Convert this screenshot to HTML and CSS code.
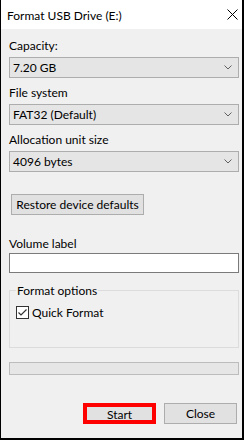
FILE: index.html
```html
<!DOCTYPE html>
<html lang="en">
<head>
  <meta charset="UTF-8" />
  <title>Format USB Drive (E:)</title>
  <link rel="stylesheet" href="styles.css">
</head>
<body>
  <div class="window">
    <div class="titlebar">
      <span class="title">Format USB Drive (E:)</span>
      <svg class="close-x" width="11" height="11" viewBox="0 0 11 11">
        <path d="M0.5 0.5L10.5 10.5M10.5 0.5L0.5 10.5" stroke="#000" stroke-width="1" fill="none"/>
      </svg>
    </div>

    <div class="content">
      <div class="field">
        <div class="label">Capacity:</div>
        <div class="combo">
          <span>7.20 GB</span>
          <svg width="8" height="5" viewBox="0 0 8 5"><path d="M0.5 0.5L4 4L7.5 0.5" stroke="#606060" fill="none"/></svg>
        </div>
      </div>

      <div class="field">
        <div class="label">File system</div>
        <div class="combo">
          <span>FAT32 (Default)</span>
          <svg width="8" height="5" viewBox="0 0 8 5"><path d="M0.5 0.5L4 4L7.5 0.5" stroke="#606060" fill="none"/></svg>
        </div>
      </div>

      <div class="field">
        <div class="label">Allocation unit size</div>
        <div class="combo">
          <span>4096 bytes</span>
          <svg width="8" height="5" viewBox="0 0 8 5"><path d="M0.5 0.5L4 4L7.5 0.5" stroke="#606060" fill="none"/></svg>
        </div>
      </div>

      <button class="btn restore">Restore device defaults</button>

      <div class="field volume">
        <div class="label">Volume label</div>
        <input type="text" class="textbox" />
      </div>

      <fieldset class="options">
        <legend>Format options</legend>
        <div class="check">
          <span class="box">
            <svg width="11" height="11" viewBox="0 0 11 11"><path d="M1.5 5.5L4 8L9.5 2.5" stroke="#333" stroke-width="1.2" fill="none"/></svg>
          </span>
          <span>Quick Format</span>
        </div>
      </fieldset>

      <div class="progress"></div>

      <div class="actions">
        <button class="btn start">Start</button>
        <button class="btn">Close</button>
      </div>
    </div>
  </div>
</body>
</html>
```

FILE: styles.css
```css
body {
  margin: 0;
  padding: 0;
  font-family: Lato, "Liberation Sans", sans-serif;
  font-size: 12px;
  color: #000;
  background-color: #f0f0f0;
}
.window {
  width: 244px;
  height: 440px;
  box-sizing: border-box;
  border-left: 1px solid #000;
  border-right: 2px solid #000;
  border-bottom: 2px solid #000;
  background-color: #f0f0f0;
  display: flex;
  flex-direction: column;
}
.titlebar {
  height: 29px;
  flex: none;
  background-color: #fff;
  display: flex;
  align-items: center;
  justify-content: space-between;
  padding: 0 4px 0 6px;
}
.title {
  line-height: 15px;
  padding-top: 1px;
}
.close-x {
  display: block;
}
.content {
  flex: 1;
  display: flex;
  flex-direction: column;
  padding: 9px 3px 14px 8px;
}
.label {
  line-height: 15px;
}
.field + .field {
  margin-top: 7px;
}
.combo {
  margin-top: 4px;
  height: 21px;
  box-sizing: border-box;
  border: 1px solid #adadad;
  background-color: #e5e5e5;
  display: flex;
  align-items: center;
  justify-content: space-between;
  padding: 0 6px 0 3px;
}
.combo svg {
  display: block;
}
.btn {
  font-family: inherit;
  font-size: 12px;
  color: #000;
  background-color: #e1e1e1;
  border: 1px solid #adadad;
  height: 21px;
  padding: 0;
  margin: 0;
}
.restore {
  align-self: flex-start;
  margin: 22px 0 0 2px;
  width: 133px;
}
.volume {
  margin-top: 21px;
}
.textbox {
  display: block;
  margin-top: 2px;
  width: 100%;
  height: 20px;
  box-sizing: border-box;
  border: 1px solid #7a7a7a;
  background-color: #fff;
  padding: 0;
}
.options {
  margin: 10px 0 0 0;
  padding: 0 6px 27px 6px;
  border: 1px solid #dcdcdc;
}
.options legend {
  padding: 0 1px;
  line-height: 15px;
}
.check {
  margin-top: 7px;
  display: flex;
  align-items: center;
  gap: 3px;
  line-height: 15px;
}
.box {
  width: 13px;
  height: 13px;
  box-sizing: border-box;
  border: 1px solid #333;
  background-color: #fff;
  display: flex;
}
.progress {
  margin-top: 14px;
  height: 13px;
  box-sizing: border-box;
  border: 1px solid #bcbcbc;
  background-color: #e6e6e6;
}
.actions {
  margin-top: auto;
  display: flex;
  justify-content: flex-end;
  gap: 8px;
  padding-right: 2px;
}
.actions .btn {
  width: 73px;
}
.actions .start {
  border: 4px solid #f00;
}
```
